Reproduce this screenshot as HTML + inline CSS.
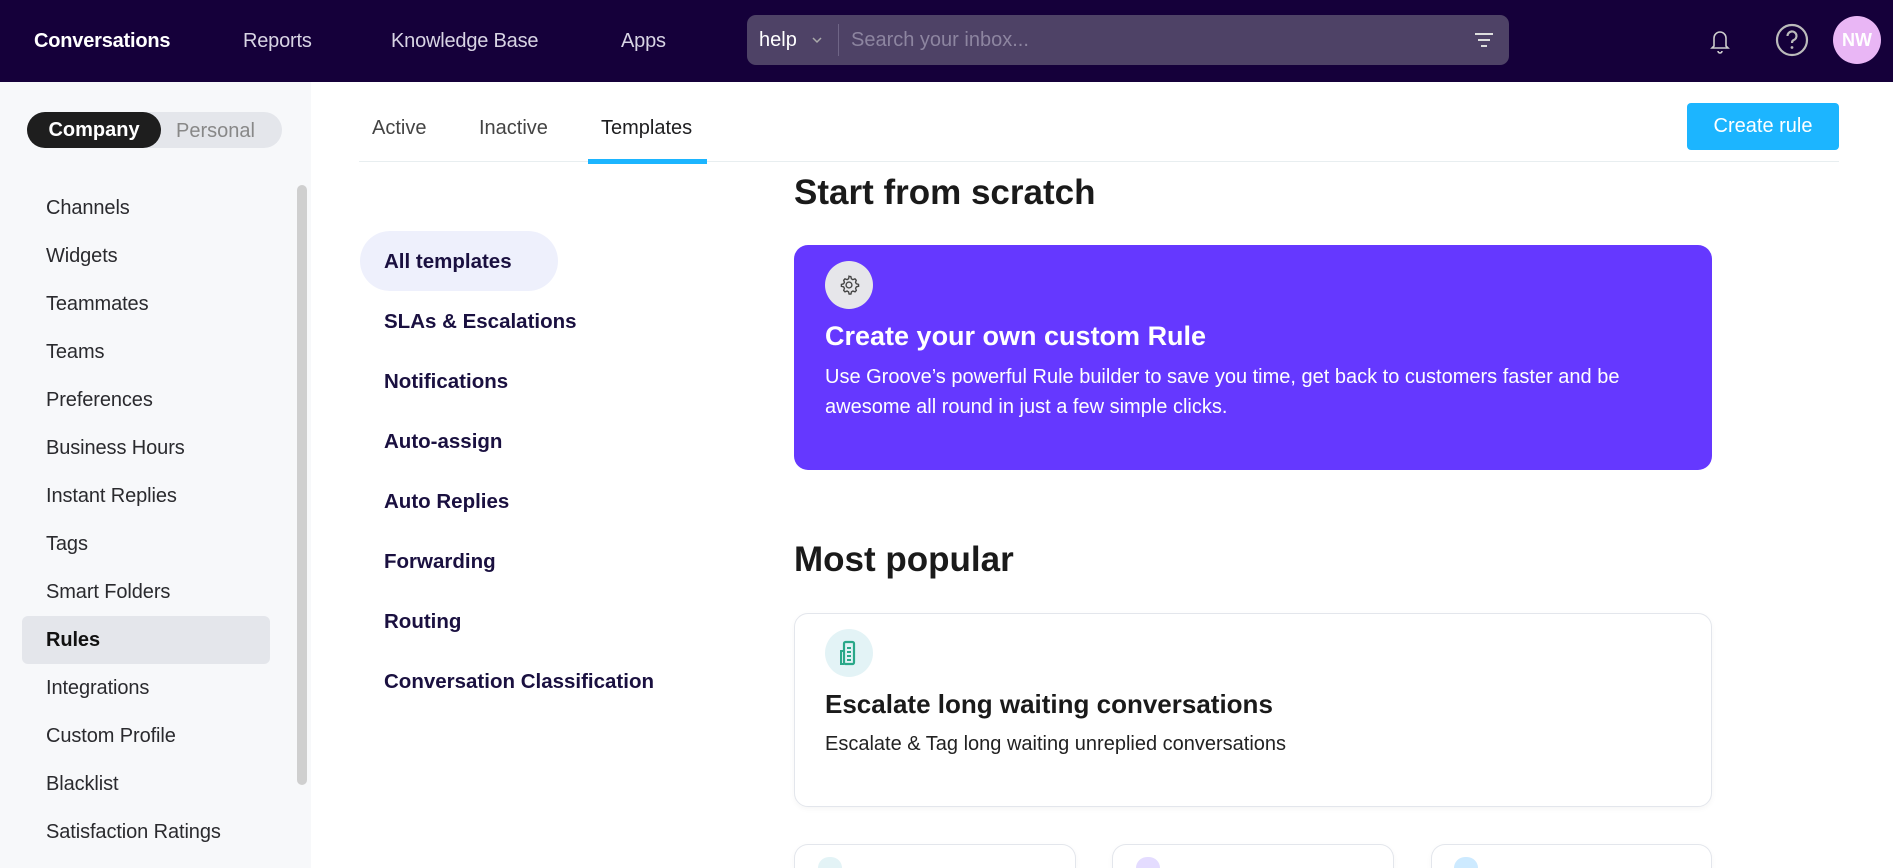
<!DOCTYPE html>
<html style="overflow:hidden"><head><meta charset="utf-8"><style>
*{margin:0;padding:0;box-sizing:border-box}
html,body{width:1893px;height:868px;overflow:hidden}
body{background:#fff;font-family:"Liberation Sans",Arial,sans-serif;position:relative;color:#1d1d1f}
.a{position:absolute;white-space:nowrap}
.nav{left:0;top:0;width:1893px;height:82px;background:#15003a}
.nl{top:30px;font-size:20px;color:#d8d4e4;letter-spacing:-0.2px}
.side{left:0;top:82px;width:311px;height:786px;background:#f7f8fa}
.si{left:46px;font-size:20px;color:#2a2a2e;letter-spacing:-0.1px}
.cat{left:384px;font-size:20.5px;font-weight:bold;color:#1a1040;letter-spacing:0}
.tab{top:117px;font-size:20px;color:#444}
.card{border:1px solid #e3e6ec;border-radius:14px;background:#fff;box-shadow:0 2px 6px rgba(0,0,0,0.04)}
</style></head><body>
<div class="a nav"></div>
<div class="a nl" style="left:34px;color:#fff;font-weight:bold">Conversations</div>
<div class="a nl" style="left:243px">Reports</div>
<div class="a nl" style="left:391px">Knowledge Base</div>
<div class="a nl" style="left:621px">Apps</div>
<div class="a" style="left:747px;top:15px;width:762px;height:50px;background:#4e4266;border-radius:9px"></div>
<div class="a" style="left:759px;top:29px;font-size:20px;color:#fff">help</div>
<svg class="a" style="left:811px;top:35px" width="12" height="10"><path d="M2 3l4 4 4-4" stroke="#aaa" fill="none" stroke-width="1.5"/></svg>
<div class="a" style="left:838px;top:24px;width:1px;height:32px;background:#6f6586"></div>
<div class="a" style="left:851px;top:29px;font-size:20px;color:#8d85a0">Search your inbox...</div>
<svg class="a" style="left:1473px;top:30px" width="22" height="20"><path d="M2 4h18M5 10h12M8 16h6" stroke="#ddd" stroke-width="2"/></svg>
<svg class="a" style="left:1708px;top:26px" width="24" height="30" viewBox="0 0 24 30"><path d="M6 20V12a6 6 0 0 1 12 0v8l2 2H4zM10 25a2 2 0 0 0 4 0" stroke="#ccc" stroke-width="1.6" fill="none"/></svg>
<svg class="a" style="left:1775px;top:23px" width="34" height="34" viewBox="0 0 34 34"><circle cx="17" cy="17" r="15" stroke="#bbb" stroke-width="2.2" fill="none"/><path d="M12.5 13a4.5 4.5 0 1 1 6 4.2c-1.2.5-1.5 1.2-1.5 2.8" stroke="#bbb" stroke-width="2.2" fill="none"/><circle cx="17" cy="24.5" r="1.4" fill="#bbb"/></svg>
<div class="a" style="left:1833px;top:16px;width:48px;height:48px;border-radius:50%;background:#e9b6f5;color:#fff;font-weight:bold;font-size:18px;text-align:center;line-height:48px">NW</div>

<div class="a side"></div>
<div class="a" style="left:27px;top:112px;width:255px;height:36px;border-radius:18px;background:#e4e6eb"></div>
<div class="a" style="left:27px;top:112px;width:134px;height:36px;border-radius:18px;background:#1e1e1e;color:#fff;font-weight:bold;font-size:20px;text-align:center;line-height:36px">Company</div>
<div class="a" style="left:176px;top:120px;font-size:20px;color:#888">Personal</div>
<div class="a" style="left:22px;top:616px;width:248px;height:48px;background:#e4e6eb;border-radius:6px"></div>
<div class="a" style="left:297px;top:185px;width:10px;height:600px;background:#cfcfcf;border-radius:5px"></div>
<div class="a si" style="top:197px">Channels</div>
<div class="a si" style="top:245px">Widgets</div>
<div class="a si" style="top:293px">Teammates</div>
<div class="a si" style="top:341px">Teams</div>
<div class="a si" style="top:389px">Preferences</div>
<div class="a si" style="top:437px">Business Hours</div>
<div class="a si" style="top:485px">Instant Replies</div>
<div class="a si" style="top:533px">Tags</div>
<div class="a si" style="top:581px">Smart Folders</div>
<div class="a si" style="top:629px;font-weight:bold;color:#111">Rules</div>
<div class="a si" style="top:677px">Integrations</div>
<div class="a si" style="top:725px">Custom Profile</div>
<div class="a si" style="top:773px">Blacklist</div>
<div class="a si" style="top:821px">Satisfaction Ratings</div>

<div class="a tab" style="left:372px">Active</div>
<div class="a tab" style="left:479px">Inactive</div>
<div class="a tab" style="left:601px;color:#1d1d1f">Templates</div>
<div class="a" style="left:359px;top:161px;width:1480px;height:1px;background:#e8eef0"></div>
<div class="a" style="left:588px;top:159px;width:119px;height:5px;background:#1cb5ff"></div>
<div class="a" style="left:1687px;top:103px;width:152px;height:47px;background:#1cb5ff;border-radius:4px;color:#fff;font-size:20px;text-align:center;line-height:47px">Create rule</div>

<div class="a" style="left:360px;top:231px;width:198px;height:60px;border-radius:30px;background:#eef0fc"></div>
<div class="a cat" style="top:250px">All templates</div>
<div class="a cat" style="top:310px">SLAs &amp; Escalations</div>
<div class="a cat" style="top:370px">Notifications</div>
<div class="a cat" style="top:430px">Auto-assign</div>
<div class="a cat" style="top:490px">Auto Replies</div>
<div class="a cat" style="top:550px">Forwarding</div>
<div class="a cat" style="top:610px">Routing</div>
<div class="a cat" style="top:670px">Conversation Classification</div>

<div class="a" style="left:794px;top:173px;font-size:35px;font-weight:bold;color:#1a1a1a">Start from scratch</div>
<div class="a" style="left:794px;top:245px;width:918px;height:225px;background:#6538ff;border-radius:14px"></div>
<div class="a" style="left:825px;top:261px;width:48px;height:48px;border-radius:50%;background:#e6e6ea"></div>
<svg class="a" style="left:838px;top:274px" width="22" height="22" viewBox="0 0 24 24"><path d="M12 2.5l2 .3.6 2.4 1.6.9 2.3-.8 1.4 1.5-.8 2.3.9 1.6 2.4.6.1 2-2.4.7-.9 1.6.8 2.3-1.4 1.5-2.3-.8-1.6.9-.6 2.4h-2l-.6-2.4-1.6-.9-2.3.8-1.4-1.5.8-2.3-.9-1.6-2.4-.6v-2l2.4-.7.9-1.6-.8-2.3 1.4-1.5 2.3.8 1.6-.9.6-2.4z" fill="none" stroke="#444" stroke-width="1.5"/><circle cx="12" cy="12" r="3.2" fill="none" stroke="#444" stroke-width="1.5"/></svg>
<div class="a" style="left:825px;top:321px;font-size:27px;font-weight:bold;color:#fff">Create your own custom Rule</div>
<div class="a" style="left:825px;top:362px;font-size:20px;line-height:30px;color:#fff;white-space:normal;width:850px">Use Groove’s powerful Rule builder to save you time, get back to customers faster and be awesome all round in just a few simple clicks.</div>

<div class="a" style="left:794px;top:540px;font-size:35px;font-weight:bold;color:#1a1a1a">Most popular</div>
<div class="a card" style="left:794px;top:613px;width:918px;height:194px"></div>
<div class="a" style="left:825px;top:629px;width:48px;height:48px;border-radius:50%;background:#e3f3f6"></div>
<svg class="a" style="left:838px;top:640px" width="22" height="26" viewBox="0 0 22 26"><rect x="6" y="2" width="10" height="22" rx="1.5" fill="none" stroke="#2aa889" stroke-width="2.2"/><path d="M6 11H3v13h3M9 8h4M9 12h4M9 16h4M9 20h4" stroke="#2aa889" stroke-width="2" fill="none"/></svg>
<div class="a" style="left:825px;top:689px;font-size:26px;font-weight:bold;color:#1a1a1a">Escalate long waiting conversations</div>
<div class="a" style="left:825px;top:733px;font-size:20px;color:#222">Escalate &amp; Tag long waiting unreplied conversations</div>

<div class="a card" style="left:794px;top:844px;width:282px;height:24px;border-bottom:none;border-radius:14px 14px 0 0"></div>
<div class="a card" style="left:1112px;top:844px;width:282px;height:24px;border-bottom:none;border-radius:14px 14px 0 0"></div>
<div class="a card" style="left:1431px;top:844px;width:281px;height:24px;border-bottom:none;border-radius:14px 14px 0 0"></div>
<div class="a" style="left:818px;top:857px;width:24px;height:11px;border-radius:12px 12px 0 0;background:#e3f3f6"></div>
<div class="a" style="left:1136px;top:857px;width:24px;height:11px;border-radius:12px 12px 0 0;background:#e4dcff"></div>
<div class="a" style="left:1454px;top:857px;width:24px;height:11px;border-radius:12px 12px 0 0;background:#cdeaff"></div>
</body></html>
